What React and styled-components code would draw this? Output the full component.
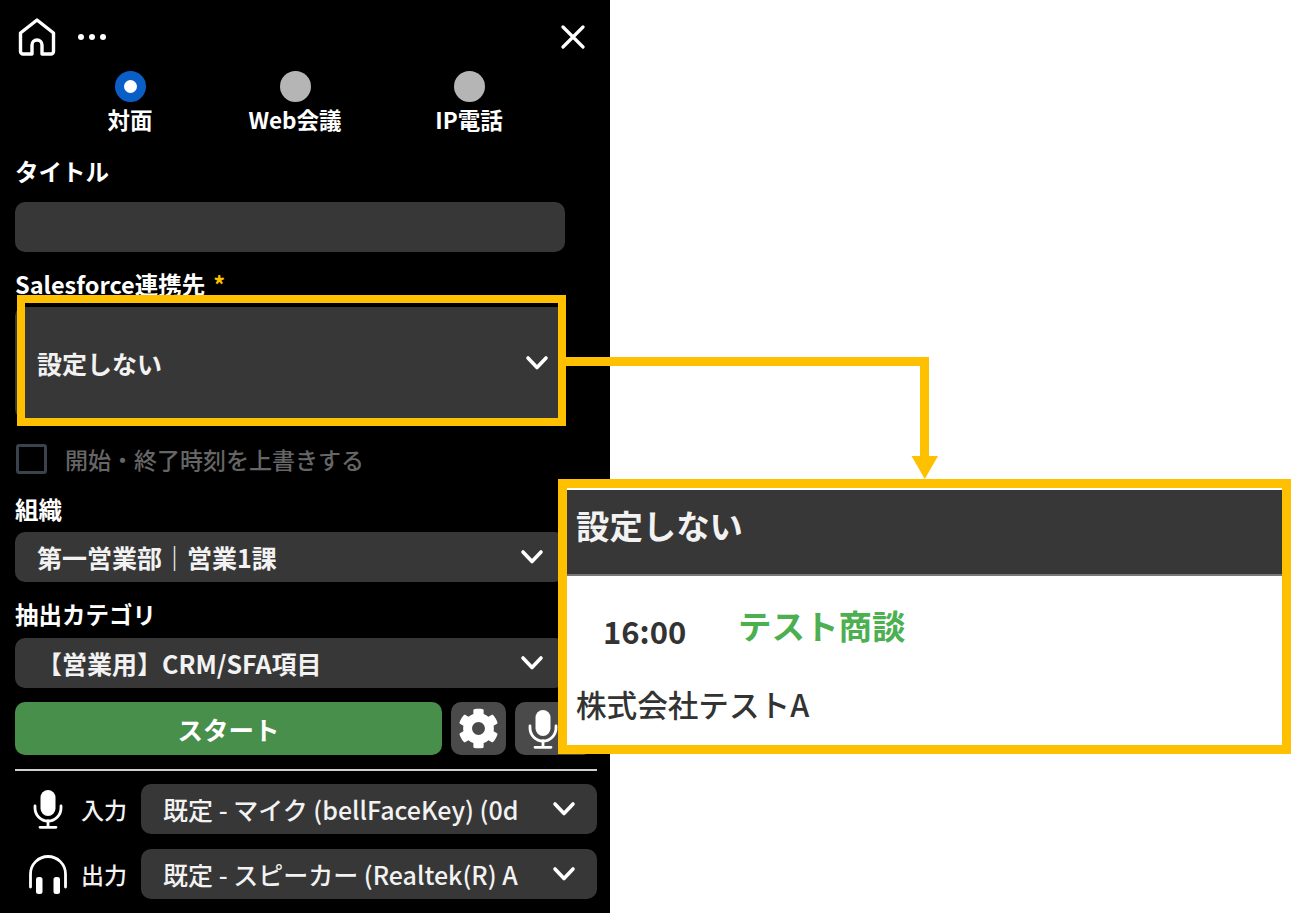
import React from "react"
import styled, { createGlobalStyle } from "styled-components"
import { FaCog } from "react-icons/fa"

const GlobalStyle = createGlobalStyle`
  html, body {
    margin: 0;
    padding: 0;
    background: #fff;
  }
  body {
    font-family: "Noto Sans CJK JP", "Noto Sans", sans-serif;
  }
`

const Page = styled.div`
  position: relative;
  width: 1291px;
  height: 913px;
  overflow: hidden;
  background: #fff;
`

const Panel = styled.div`
  box-sizing: border-box;
  width: 610px;
  height: 913px;
  padding: 17px 13px 0 15px;
  background: #000;
  color: #fff;
`

const Header = styled.div`
  box-sizing: border-box;
  display: flex;
  align-items: center;
  height: 39px;
  padding: 1px 8px 0 3px;
  gap: 22px;
`

const HomeIcon = styled.svg`
  margin-top: -1px;
`

const CloseIcon = styled.svg`
  margin-left: auto;
  margin-right: 4px;
`

const Radios = styled.div`
  display: grid;
  grid-template-columns: 230px 100px 248px;
  margin-top: 15px;
`

const RadioItem = styled.div`
  display: flex;
  flex-direction: column;
  align-items: center;
`

const RadioDot = styled.span`
  box-sizing: border-box;
  width: 31px;
  height: 31px;
  border-radius: 50%;
  background: ${props => props.checked ? '#fff' : '#b5b5b5'};
  border: ${props => props.checked ? '9px solid #0a5fc7' : 'none'};
`

const RadioLabel = styled.span`
  margin-top: -1px;
  font-size: 22.5px;
  line-height: 36px;
  font-weight: 700;
  white-space: nowrap;
`

const FieldLabel = styled.div`
  margin-top: ${props => props.top}px;
  font-size: 23.5px;
  line-height: 30px;
  font-weight: 700;
  white-space: nowrap;

  em {
    margin-left: 8px;
    color: #ffc000;
    font-style: normal;
  }
`

const TextInput = styled.div`
  width: 550px;
  height: 50px;
  margin-top: 16px;
  border-radius: 10px;
  background: #373737;
`

const Select = styled.div`
  box-sizing: border-box;
  display: flex;
  align-items: center;
  flex: ${props => props.grow ? '1' : 'none'};
  min-width: 0;
  width: ${props => props.grow ? 'auto' : '550px'};
  height: ${props => props.tall ? 113 : 50}px;
  margin-top: ${props => props.top || 0}px;
  padding: 0 ${props => props.tall ? 16 : 21}px 0 22px;
  border-radius: 10px;
  background: #373737;
  font-weight: ${props => props.grow ? 500 : 700};
  color: #f2f2f2;
`

const SelectText = styled.span`
  flex: 1;
  min-width: 0;
  overflow: hidden;
  white-space: nowrap;
  font-size: 25px;
`

const Chevron = styled.svg`
  flex: none;
  margin-left: ${props => props.gap || 0}px;
`

const CheckRow = styled.div`
  display: flex;
  align-items: center;
  gap: 18px;
  height: 30px;
  margin: 25px 0 0 1px;
`

const CheckBox = styled.span`
  box-sizing: border-box;
  width: 31px;
  height: 30px;
  border: 3px solid #3a424d;
  border-radius: 3px;
`

const CheckLabel = styled.span`
  font-size: 23px;
  line-height: 30px;
  font-weight: 500;
  color: #666;
`

const Actions = styled.div`
  display: flex;
  gap: 9px;
  height: 53px;
  margin-top: 14px;
`

const StartButton = styled.div`
  display: flex;
  align-items: center;
  justify-content: center;
  width: 427px;
  border-radius: 10px;
  background: #478f4b;
  font-size: 25.5px;
  font-weight: 700;
`

const IconButton = styled.div`
  box-sizing: border-box;
  display: flex;
  align-items: center;
  justify-content: center;
  width: ${props => props.wide ? 78 : 55}px;
  padding-right: ${props => props.wide ? 23 : 0}px;
  border-radius: 10px;
  background: #4a4a4a;
`

const Divider = styled.div`
  width: 582px;
  height: 2px;
  margin-top: 14px;
  background: #d0d0d0;
`

const DeviceRow = styled.div`
  display: flex;
  align-items: center;
  width: 582px;
  height: 50px;
  margin-top: ${props => props.top}px;
`

const DeviceIcon = styled.div`
  display: flex;
  justify-content: center;
  width: 66px;
  flex: none;
`

const DeviceLabel = styled.span`
  width: 60px;
  flex: none;
  font-size: 23px;
  font-weight: 500;
  color: #f2f2f2;
`

/* 黄色の注釈はスクショの上に載っているので absolute */
const Frame = styled.div`
  position: absolute;
  left: 17px;
  top: 295px;
  box-sizing: border-box;
  width: 549px;
  height: 131px;
  border: 8px solid #ffc000;
`

const FrameGap = styled.div`
  height: 4px;
  background: #000;
`

const Connector = styled.svg`
  position: absolute;
  left: 560px;
  top: 350px;
`

const Callout = styled.div`
  position: absolute;
  left: 558px;
  top: 479px;
  box-sizing: border-box;
  width: 733px;
  height: 275px;
  border: 9px solid #ffc000;
  background: #fff;
  color: #333;
`

const CalloutHead = styled.div`
  box-sizing: border-box;
  display: flex;
  align-items: center;
  height: 86px;
  margin-top: 2px;
  padding: 0 0 15px 9px;
  background: #373737;
  border-bottom: 2px solid #777;
  color: #f2f2f2;
  font-size: 33.4px;
  font-weight: 700;
`

const CalloutRow = styled.div`
  display: flex;
  align-items: baseline;
  margin-top: 28px;
  padding-left: 36px;
`

const CalloutTime = styled.span`
  width: 135px;
  font-size: 31px;
  font-weight: 700;
  line-height: 52px;
`

const CalloutTitle = styled.span`
  position: relative;
  top: -5px;
  font-size: 33.5px;
  font-weight: 700;
  line-height: 52px;
  color: #4caf50;
`

const CalloutCompany = styled.div`
  margin-top: 25px;
  padding-left: 9px;
  font-size: 30.6px;
  font-weight: 500;
  line-height: 44px;
`

const ChevronDown = ({ gap }) => (
  <Chevron gap={gap} width="24" height="16" viewBox="0 0 24 16" fill="none">
    <path d="M3 3 L12 12.5 L21 3" stroke="#fff" strokeWidth="3.6" strokeLinecap="round" strokeLinejoin="round" />
  </Chevron>
)

const MicIcon = () => (
  <svg width="30" height="40" viewBox="0 0 30 40" fill="none">
    <rect x="7.5" y="1" width="15" height="26" rx="7.5" fill="#fff" />
    <path d="M2 17 V19 A13 13 0 0 0 28 19 V17" stroke="#fff" strokeWidth="2.8" strokeLinecap="round" />
    <path d="M15 32 V38 M7 38.3 H23" stroke="#fff" strokeWidth="2.8" strokeLinecap="round" />
  </svg>
)

const HeadphoneIcon = () => (
  <svg width="40" height="40" viewBox="0 0 40 40" fill="none">
    <path d="M2.5 33 V20 A17.5 17.5 0 0 1 37.5 20 V33" stroke="#fff" strokeWidth="2.8" strokeLinecap="round" />
    <rect x="8" y="23" width="6.5" height="17" rx="2.5" fill="#fff" />
    <rect x="25.5" y="23" width="6.5" height="17" rx="2.5" fill="#fff" />
  </svg>
)

const App = () => {
  return (
    <Page>
      <GlobalStyle />
      <Panel>
        <Header>
          <HomeIcon width="38" height="38" viewBox="0 0 38 38" fill="none">
            <path
              d="M14 36 H5 A2.5 2.5 0 0 1 2.5 33.5 V15 L19 2 L35.5 15 V33.5 A2.5 2.5 0 0 1 33 36 H24 V27 A5 5 0 0 0 14 27 Z"
              stroke="#fff"
              strokeWidth="3.4"
              strokeLinejoin="round"
            />
          </HomeIcon>
          <svg width="28" height="6" viewBox="0 0 28 6" fill="#fff">
            <circle cx="3" cy="3" r="3" />
            <circle cx="14" cy="3" r="3" />
            <circle cx="25" cy="3" r="3" />
          </svg>
          <CloseIcon width="24" height="24" viewBox="0 0 24 24" fill="none">
            <path d="M2 2 L22 22 M22 2 L2 22" stroke="#fff" strokeWidth="3.2" strokeLinecap="round" />
          </CloseIcon>
        </Header>

        <Radios>
          <RadioItem>
            <RadioDot checked />
            <RadioLabel>対面</RadioLabel>
          </RadioItem>
          <RadioItem>
            <RadioDot />
            <RadioLabel>Web会議</RadioLabel>
          </RadioItem>
          <RadioItem>
            <RadioDot />
            <RadioLabel>IP電話</RadioLabel>
          </RadioItem>
        </Radios>

        <FieldLabel top={19}>タイトル</FieldLabel>
        <TextInput />

        <FieldLabel top={17}>Salesforce連携先<em>*</em></FieldLabel>
        <Select tall top={7}>
          <SelectText>設定しない</SelectText>
          <ChevronDown />
        </Select>

        <CheckRow>
          <CheckBox />
          <CheckLabel>開始・終了時刻を上書きする</CheckLabel>
        </CheckRow>

        <FieldLabel top={20}>組織</FieldLabel>
        <Select top={8}>
          <SelectText>第一営業部｜営業1課</SelectText>
          <ChevronDown />
        </Select>

        <FieldLabel top={17}>抽出カテゴリ</FieldLabel>
        <Select top={9}>
          <SelectText>【営業用】CRM/SFA項目</SelectText>
          <ChevronDown />
        </Select>

        <Actions>
          <StartButton>スタート</StartButton>
          <IconButton>
            <FaCog size={41} color="#fff" />
          </IconButton>
          <IconButton wide>
            <MicIcon />
          </IconButton>
        </Actions>

        <Divider />

        <DeviceRow top={13}>
          <DeviceIcon><MicIcon /></DeviceIcon>
          <DeviceLabel>入力</DeviceLabel>
          <Select grow>
            <SelectText>既定 - マイク (bellFaceKey) (0d</SelectText>
            <ChevronDown gap={32} />
          </Select>
        </DeviceRow>
        <DeviceRow top={15}>
          <DeviceIcon><HeadphoneIcon /></DeviceIcon>
          <DeviceLabel>出力</DeviceLabel>
          <Select grow>
            <SelectText>既定 - スピーカー (Realtek(R) A</SelectText>
            <ChevronDown gap={32} />
          </Select>
        </DeviceRow>
      </Panel>

      <Frame>
        <FrameGap />
      </Frame>

      <Connector width="380" height="130" viewBox="0 0 380 130">
        <path d="M5 11.5 H364.5 V108" fill="none" stroke="#ffc000" strokeWidth="9" />
        <path d="M351.5 106 H378 L364.8 129 Z" fill="#ffc000" />
      </Connector>

      <Callout>
        <CalloutHead>設定しない</CalloutHead>
        <CalloutRow>
          <CalloutTime>16:00</CalloutTime>
          <CalloutTitle>テスト商談</CalloutTitle>
        </CalloutRow>
        <CalloutCompany>株式会社テストA</CalloutCompany>
      </Callout>
    </Page>
  )
}

export default App
